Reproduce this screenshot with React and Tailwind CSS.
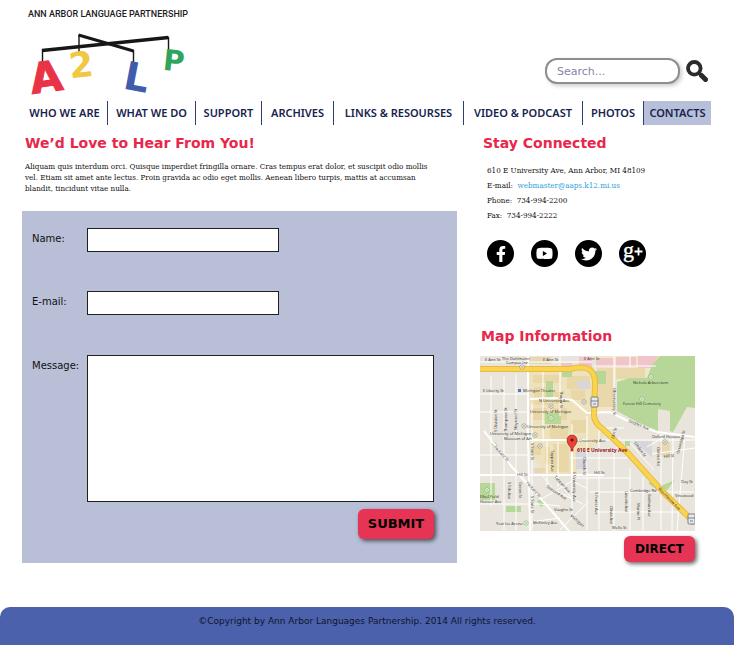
import { FaFacebookF, FaTwitter, FaYoutube } from "react-icons/fa";

const navItems = [
  "WHO WE ARE",
  "WHAT WE DO",
  "SUPPORT",
  "ARCHIVES",
  "LINKS & RESOURSES",
  "VIDEO & PODCAST",
  "PHOTOS",
  "CONTACTS",
];

function Logo() {
  return (
    <svg viewBox="28 32 160 64" className="h-16 w-40 overflow-visible" role="img" aria-label="A2LP">
      <g stroke="#17171a" fill="none">
        <path d="M42.5 49v13M79 35v17M133.5 50v13M168.5 37v14" strokeWidth="1.4" />
        <path d="M42 50.5 168.5 37.5" strokeWidth="3.400" />
        <path d="M78.500 35 133.500 51" strokeWidth="3" />
      </g>
      <g fontFamily="'DejaVu Sans', sans-serif" fontWeight="700" textAnchor="middle">
        <text x="46" y="92" fontSize="42" fill="#e93448" stroke="#e93448" transform="rotate(-8 46 77)">A</text>
        <text x="81" y="77" fontSize="35" fill="#f1c842" transform="rotate(-6 81 64)">2</text>
        <text x="137" y="91" fontSize="39" fill="#405cab" transform="rotate(11 137 77)">L</text>
        <text x="174" y="71" fontSize="29" fill="#30a35c" transform="rotate(6 174 60)">P</text>
      </g>
    </svg>
  );
}

function Header() {
  return (
    <header className="flex items-end justify-between pl-1.5 pr-1">
      <div>
        <p className="h-8 pt-1.5 font-['Roboto',sans-serif] text-[9px] leading-4 font-medium text-[#1c1c1e]">
          ANN ARBOR LANGUAGE PARTNERSHIP
        </p>
        <Logo />
      </div>
      <form role="search" className="mb-3 flex items-center gap-1.5">
        <input
          type="text"
          aria-label="Search"
          placeholder="Search..."
          className="h-[26px] w-[135px] rounded-xl border-2 border-[#8e8e90] bg-white px-2.5 text-[11px] shadow-[2px_2px_4px_rgba(0,0,0,0.2)] placeholder:text-[#8583a8]"
        />
        <button type="submit" aria-label="Go">
          <svg viewBox="0 0 22 22" className="size-[22px]" fill="none" stroke="#2b2b2b">
            <circle cx="8.300" cy="8.300" r="6.300" strokeWidth="3.800" />
            <path d="m12.500 12.500 3 3" strokeWidth="3.400" />
            <path d="m15.500 15.500 4 4" strokeWidth="5" strokeLinecap="round" />
          </svg>
        </button>
      </form>
    </header>
  );
}

function Nav() {
  return (
    <nav className="mt-[5px] mr-[1px]">
      <ul className="grid h-6 grid-cols-[85fr_88fr_66fr_72fr_130fr_119fr_61fr_68fr] font-['Noto_Sans',sans-serif] text-[11px] font-semibold whitespace-nowrap text-[#18234f]">
        {navItems.map((item, i) => (
          <li
            key={item}
            className={
              i === navItems.length - 1
                ? "flex items-center justify-center border-l border-[#303d73] bg-[#b8c0d9]"
                : i === 0
                  ? "flex items-center justify-center"
                  : "flex items-center justify-center border-l border-[#303d73]"
            }
          >
            <a href="#">{item}</a>
          </li>
        ))}
      </ul>
    </nav>
  );
}

function ContactForm() {
  const field = "border border-[#202020] bg-white px-2 text-[11px]";
  const label = "w-[55px] shrink-0 pt-1 text-[10px] leading-[14px]";
  return (
    <form className="mt-[17px] bg-[#b8bfd7] pt-[17px] pr-[23px] pb-6 pl-2.5">
      <div className="flex h-[63px]">
        <label htmlFor="name" className={label}>Name:</label>
        <input id="name" type="text" className={`${field} h-6 w-48`} />
      </div>
      <div className="flex h-16">
        <label htmlFor="email" className={label}>E-mail:</label>
        <input id="email" type="email" className={`${field} h-6 w-48`} />
      </div>
      <div className="flex">
        <label htmlFor="message" className={label}>Message:</label>
        <textarea id="message" className={`${field} h-[147px] min-w-0 flex-1 resize-none`} />
      </div>
      <div className="mt-[7px] flex justify-end">
        <button
          type="submit"
          className="h-[30px] w-[76px] rounded-md bg-[#e83454] text-[13px] font-bold text-black shadow-[2px_2px_4px_rgba(0,0,0,0.6)]"
        >
          SUBMIT
        </button>
      </div>
    </form>
  );
}

function SocialLinks() {
  const circle = "flex size-[27px] items-center justify-center rounded-full bg-black text-white";
  return (
    <ul className="mt-[17px] ml-[7px] flex gap-[17px]">
      <li><a href="#" aria-label="Facebook" className={circle}><FaFacebookF className="size-4" /></a></li>
      <li><a href="#" aria-label="YouTube" className={circle}><FaYoutube className="size-[17px]" /></a></li>
      <li><a href="#" aria-label="Twitter" className={circle}><FaTwitter className="size-4" /></a></li>
      <li>
        <a href="#" aria-label="Google Plus" className={circle}>
          <svg viewBox="0 0 27 27" className="size-full overflow-visible">
            <text x="4" y="17" fontSize="22" fill="#fff" stroke="#fff" strokeWidth="0.400" fontFamily="'Liberation Serif', serif">g</text>
            <path d="M19.500 7.500v8M15.500 11.500h8" stroke="#fff" strokeWidth="1.800" />
          </svg>
        </a>
      </li>
    </ul>
  );
}

const mapLabels = [
  [5, 5, "E Ann St", 0], [22, 4, "The Dahlmann", 0], [26, 8, "Campus Inn", 0], [63, 5, "E Ann St", 0], [104, 4, "E Ann St", 0],
  [3, 36, "E Liberty St", 0], [43, 36, "Michigan Theater", 0], [59, 46, "N University Ave", 0],
  [50, 57, "University of Michigan", 0], [47, 72, "University of Michigan", 0],
  [10, 79, "University of Michigan", 0], [24, 84, "Museum of Art", 0], [96, 86, "S University Ave", 0],
  [153, 28, "Nichols Arboretum", 0], [143, 49, "Forest Hill Cemetery", 0], [148, 66, "Geddes Ave", 22],
  [172, 82, "Oxford Houses", 0], [37, 120, "Hill St", 0], [114, 118, "Hill St", 0], [184, 102, "Hill St", -8],
  [0, 142, "Elbel Field", 0], [0, 147, "Hoover Ave", 0], [16, 169, "Yost Ice Arena", 0], [53, 168, "McKinley Ave", 0],
  [14, 91, "Packard St", 49], [46, 127, "Packard St", 49], [51, 87, "S State St", 90], [51, 140, "S State St", 90],
  [71, 94, "Tappan Ave", 90], [93, 116, "E University Ave", 90], [103, 101, "Church St", 90], [133, 32, "Observatory St", 90],
  [80, 35, "Thayer St", 90], [17, 76, "S Division St", -90], [27, 76, "Thompson St", -90], [37, 74, "Maynard St", -90],
  [28, 126, "S 5th Ave", 90], [39, 126, "Green St", 90], [66, 131, "Oakland Ave", 34], [74, 121, "Tappan Ave", 48],
  [74, 155, "Vaughn St", 0], [90, 160, "Michigan", 42], [150, 136, "Cambridge Rd", 0],
  [115, 136, "S Forest Ave", 90], [130, 150, "Olivia Ave", 90], [145, 135, "Lincoln Ave", 90], [157, 147, "Martin Pl", 90],
  [168, 138, "Baldwin Ave", 90], [177, 91, "Oxford Rd", 90], [199, 98, "Onondaga St", -75], [154, 87, "Linden St", 55],
  [134, 83, "Elm St", -75], [132, 173, "Wells St", 0], [195, 141, "Vinewood", 0], [201, 127, "Day St", 0],
];

const buildings = [
  [54, 31, 15, 18], [72, 36, 10, 12], [87, 20, 23, 13], [91, 34, 14, 10], [53, 52, 14, 12], [70, 52, 17, 12],
  [70, 70, 18, 15], [91, 64, 15, 13], [52, 89, 9, 10], [54, 112, 11, 5], [73, 88, 16, 28], [65, 91, 5, 17],
  [117, 12, 16, 39], [136, 12, 29, 11], [47, 1, 24, 7], [53, 19, 26, 8], [179, 86, 11, 15],
];

function CampusMap() {
  return (
    <svg viewBox="0 0 215 175" className="block w-full" role="img" aria-label="Map of 610 E University Ave">
      <rect width="215" height="175" fill="#e9e5dc" />
      <path d="M49 15h62l4 46 13 15-22 24-10 19H67L51 98Z" fill="#eee2bd" />
      <path d="M115 0h64l-14 25h-31v32h-17Z" fill="#f1e6c9" />
      <g fill="#e7d3a0" opacity="0.7">
        {buildings.map(([x, y, w, h]) => <rect key={`${x}-${y}`} x={x} y={y} width={w} height={h} />)}
      </g>
      <path d="M116 2h18v9h-18Zm20-1h20v10h-20Zm22-2h21l-8 13h-13ZM99 1h13v10H99ZM79 7h13v5H79Z" fill="#efc5ca" />
      <path d="M137 26 150 22h17L172 9l8-9h35v52l-8-1-14 25-3-1V55l-12-2v22l-21-9-20-11Z" fill="#b6d797" />
      <g fill="#b6d797">
        <path d="M66 25h7v17h-7ZM82 15h10v6H82ZM115 15h11v13h-11ZM65 57h16v11H65ZM0 127h15v17H0ZM26 150h15v6H26ZM12 84l5 4-1 4-5-4ZM57 145l6-3 2 6-4 3ZM169 126h7v7l-7-5ZM183 129l12-5-8 10-7-2ZM145 85h5v5h-5Z" />
      </g>
      <path d="m95 27 12-4 4 9-10 2ZM96 96h12v17H96ZM153 85h19v16l-8-7Z" fill="#d8d6da" />
      <g fill="none" stroke="#fff" strokeWidth="1">
        <path d="M0 38h49M0 56h49M0 99h49M0 148h60l20 2M49 166l31-4M11 20v130M24 20v154M36 18v156M63 14v72M80 0v60M67 84v48M78 86v45M92 68v94M107 60v114M119 71v104M134 93v82M150 112v63M163 121v54M93 122h58M90 102h57M122 84h93M114 10h62M134 0v57M0 6h112M52 48v126M150 0v11M181 78v96M193 80l-1 95M205 79l-8 96M172 98l43-6M110 136h104M115 156h84M140 81l-6 18M150 87l24 27M167 91l19-11M121 72h23M62 119l12 15 29 14M74 118l19 27M60 144l32-19 16 8M80 174l28-28" />
      </g>
      <g fill="none" stroke="#fff" strokeWidth="2">
        <path d="M48 0v78l2 97M0 119h124M4 75l28 36 30 33 27 31M50 84h57M50 43l24-1 18 2 15 13 23-1 20 10 27 10 38 5M92 78v43" />
      </g>
      <path d="M0 13h90c18-4 25 0 25 15l-1 31q0 8 9 14l24 23 36 40 32 31" fill="none" stroke="#e5bb45" strokeWidth="6" />
      <path d="M0 13h90c18-4 25 0 25 15l-1 31q0 8 9 14l24 23 36 40 32 31" fill="none" stroke="#fbd44e" strokeWidth="4" />
      <g fontFamily="'Open Sans', sans-serif" fontSize="4" fontWeight="500" fill="#333">
        {mapLabels.map(([x, y, text, angle]) => (
          <text key={`${x}-${y}`} x={x} y={y} transform={`rotate(${angle} ${x} ${y})`}>{text}</text>
        ))}
        <text x="178" y="133" transform="rotate(46 178 133)">Washtenaw Ave</text>
      </g>
      <g fill="#fff" stroke="#82775f" strokeWidth="0.600">
        {[[42, 11], [71, 50], [104, 46], [55, 79], [60, 90], [44, 70], [185, 86]].map(([x, y]) => (
          <g key={`${x}-${y}`}><circle cx={x} cy={y} r="2.200" /><circle cx={x} cy={y} r="0.600" /></g>
        ))}
        {[[171, 21], [162, 43], [71, 62], [7, 134], [46, 167]].map(([x, y]) => (
          <g key={`${x}-${y}`} stroke="#69a949"><circle cx={x} cy={y} r="2.200" /><circle cx={x} cy={y} r="0.600" /></g>
        ))}
      </g>
      <path d="M38 33h3v3h-3Z" fill="#467bbd" />
      {[[114, 46], [211, 163]].map(([x, y]) => (
        <g key={x} fill="#e6e9ed" stroke="#6e7580" strokeWidth="0.900">
          <rect x={x - 3} y={y - 5} width="7" height="10" rx="1" />
          <path d={`M${x - 3} ${y - 1}h7M${x - 1} ${y + 2}h3`} />
        </g>
      ))}
      <path d="M92 95c-1-5-5-6-5-11a5 5 0 0 1 10 0c0 5-4 6-5 11Z" fill="#ea4335" stroke="#a52b23" strokeWidth="0.700" />
      <circle cx="92" cy="84" r="1.600" fill="#641713" />
      <circle cx="92" cy="94" r="1.500" fill="#cf2828" />
      <text x="97" y="96" fontFamily="'Open Sans', sans-serif" fontSize="5" fontWeight="700" fill="#98101e">610 E University Ave</text>
    </svg>
  );
}

export default function App() {
  const heading = "text-[14px] leading-5 font-bold text-[#e8274b]";
  return (
    <div className="flex min-h-screen flex-col bg-white font-['DejaVu_Sans',Verdana,sans-serif] text-[#111]">
      <div className="px-[22px]">
        <Header />
        <Nav />
        <main className="mt-2 grid grid-cols-[minmax(0,1fr)_215px] gap-[23px] pr-[17px]">
          <section>
            <h1 className={`${heading} pl-[3px]`}>We’d Love to Hear From You!</h1>
            <p className="mt-2 px-[3px] font-['DejaVu_Serif_Condensed','DejaVu_Serif',serif] text-[8px] leading-[11px]">
              Aliquam quis interdum orci. Quisque imperdiet fringilla ornare. Cras tempus erat dolor, et suscipit odio mollis
              <br />
              vel. Etiam sit amet ante lectus. Proin gravida ac odio eget mollis. Aenean libero turpis, mattis at accumsan
              <br />
              blandit, tincidunt vitae nulla.
            </p>
            <ContactForm />
          </section>
          <aside>
            <h2 className={`${heading} pl-[3px]`}>Stay Connected</h2>
            <address className="mt-2.5 pl-[7px] font-['DejaVu_Serif_Condensed','DejaVu_Serif',serif] text-[8px] leading-[15px] not-italic">
              <p>610 E University Ave, Ann Arbor, MI 48109</p>
              <p>E-mail:&nbsp; <a href="mailto:webmaster@aaps.k12.mi.us" className="text-[#2c9fd8]">webmaster@aaps.k12.mi.us</a></p>
              <p>Phone:&nbsp; 734-994-2200</p>
              <p>Fax:&nbsp; 734-994-2222</p>
            </address>
            <SocialLinks />
            <h2 className={`${heading} mt-[59px] mb-2.5 pl-[1px]`}>Map Information</h2>
            <CampusMap />
            <div className="mt-[5px] flex justify-end">
              <button
                type="button"
                className="h-[26px] w-[71px] rounded-md bg-[#e83454] text-[12px] font-bold text-black shadow-[2px_2px_4px_rgba(0,0,0,0.6)]"
              >
                DIRECT
              </button>
            </div>
          </aside>
        </main>
      </div>
      <footer className="mt-auto h-[38px] rounded-t-[10px] bg-[#4b61ac] pt-2 text-center text-[9px] leading-3 text-[#10142c]">
        ©Copyright by Ann Arbor Languages Partnership. 2014 All rights reserved.
      </footer>
    </div>
  );
}
